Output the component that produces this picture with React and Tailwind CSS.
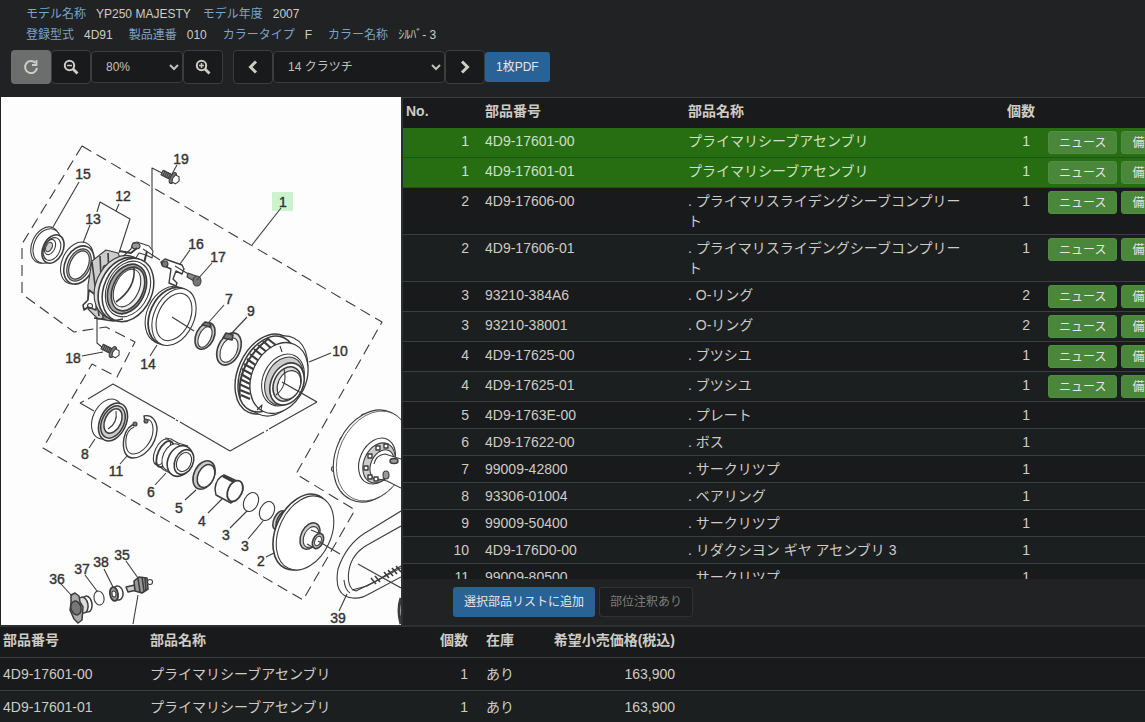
const parts = [
  { no: 1, code: '4D9-17601-00', name: 'プライマリシーブアセンブリ', qty: 1, news: true, selected: true },
  { no: 1, code: '4D9-17601-01', name: 'プライマリシーブアセンブリ', qty: 1, news: true, selected: true },
  { no: 2, code: '4D9-17606-00', name: '. プライマリスライデングシーブコンプリート', qty: 1, news: true },
  { no: 2, code: '4D9-17606-01', name: '. プライマリスライデングシーブコンプリート', qty: 1, news: true },
  { no: 3, code: '93210-384A6', name: '. O-リング', qty: 2, news: true },
  { no: 3, code: '93210-38001', name: '. O-リング', qty: 2, news: true },
  { no: 4, code: '4D9-17625-00', name: '. ブツシユ', qty: 1, news: true },
  { no: 4, code: '4D9-17625-01', name: '. ブツシユ', qty: 1, news: true },
  { no: 5, code: '4D9-1763E-00', name: '. プレート', qty: 1 },
  { no: 6, code: '4D9-17622-00', name: '. ボス', qty: 1 },
  { no: 7, code: '99009-42800', name: '. サークリツプ', qty: 1 },
  { no: 8, code: '93306-01004', name: '. ベアリング', qty: 1 },
  { no: 9, code: '99009-50400', name: '. サークリツプ', qty: 1 },
  { no: 10, code: '4D9-176D0-00', name: '. リダクシヨン ギヤ アセンブリ 3', qty: 1 },
  { no: 11, code: '99009-80500', name: '. サークリツプ', qty: 1 },
]

const cart = [
  { code: '4D9-17601-00', name: 'プライマリシーブアセンブリ', qty: 1, stock: 'あり', price: '163,900' },
  { code: '4D9-17601-01', name: 'プライマリシーブアセンブリ', qty: 1, stock: 'あり', price: '163,900' },
]

// number, label centre, then the leader line
const callouts = [
  ['19', 181, 159, 177, 165, 172, 174],
  ['15', 83, 174, 79, 182, 53, 227],
  ['12', 123, 196, 119, 204, 116, 211],
  ['13', 93, 219, 90, 225, 83, 243],
  ['16', 196, 244, 190, 250, 180, 264],
  ['17', 218, 257, 212, 263, 197, 280],
  ['1', 283, 202, 281, 208, 252, 245],
  ['7', 229, 299, 224, 305, 209, 322],
  ['9', 251, 311, 247, 317, 232, 333],
  ['10', 340, 351, 331, 353, 309, 362],
  ['14', 148, 364, 150, 356, 157, 345],
  ['18', 73, 358, 82, 356, 103, 352],
  ['8', 85, 454, 89, 448, 95, 439],
  ['11', 116, 471, 120, 464, 127, 456],
  ['6', 151, 492, 155, 485, 166, 473],
  ['5', 179, 508, 185, 500, 196, 490],
  ['4', 202, 521, 208, 513, 222, 499],
  ['3', 226, 535, 230, 528, 247, 511],
  ['3', 245, 546, 248, 539, 263, 521],
  ['2', 261, 561, 266, 557, 274, 553],
  ['39', 338, 618, 339, 611, 347, 594],
  ['36', 57, 579, 61, 584, 72, 596],
  ['37', 82, 569, 85, 575, 97, 591],
  ['38', 101, 562, 104, 569, 113, 587],
  ['35', 122, 555, 126, 561, 138, 578],
]

const Ring = ({ x, y, rx, ry, a = 25, fill = 'none', w = 1.1 }) => (
  <ellipse cx={x} cy={y} rx={rx} ry={ry} transform={`rotate(${a} ${x} ${y})`} fill={fill} strokeWidth={w} />
)

const Bolt = ({ x, y, a = 27 }) => (
  <g transform={`translate(${x} ${y}) rotate(${a})`}>
    <rect x="-1" y="-2.5" width="11" height="5" fill="#888" />
    <path d="M1 -3v6M3 -3v6M5 -3v6M7 -3v6M9 -3v6" />
    <ellipse cx="11" cy="0" rx="2.5" ry="6" fill="#777" />
    <path d="M12 -4l4 0 2 4-2 4-4 0-1-4z" fill="#fff" />
  </g>
)

const Diagram = () => (
  <svg viewBox="1 97 400 528" preserveAspectRatio="xMinYMin slice" className="block h-full w-full" role="img" aria-label="14 クラツチ">
    <rect x="272" y="192" width="21" height="19" fill="#cdf3cd" />
    <g fill="none" stroke="#3c3c3c" strokeWidth="1.1" strokeLinejoin="round">
      <path
        strokeDasharray="11 6"
        d="M82 146L22 244V294L74 332 106 327 135 342 117 377 92 364 43 448 303 600 355 510 296 474 382 322Z"
      />
      <path d="M94 411L80 403 M88 399L113 384 175 419 M180 422L230 451 264 432 M269 429L317 402 M80 403l4-2 M176 420l2 1 M266 431l2-1" />
      <path d="M152 254V168L162 173 M97 212L100 202 130 219 119 253 M97 304V343L103 348 M138 595L133 624" />

      {/* 15 */}
      <Ring x={45} y={245} rx={13} ry={19} fill="#fff" />
      <Ring x={47} y={246} rx={13} ry={18} fill="#fff" />
      <Ring x={53} y={249} rx={10} ry={15} fill="#fff" w={1.6} />
      <Ring x={52} y={249} rx={8} ry={12} />
      <Ring x={50} y={247} rx={5} ry={8} />
      <Ring x={49} y={247} rx={3} ry={5} fill="#ccc" />

      {/* 13 */}
      <Ring x={77} y={263} rx={15} ry={22} fill="#fff" />
      <Ring x={79} y={265} rx={14} ry={20} fill="#fff" w={1.6} />
      <Ring x={79} y={265} rx={11} ry={17} fill="#bbb" />
      <Ring x={79} y={265} rx={9} ry={15} fill="#fff" />

      {/* 12 */}
      <path fill="#fff" d="M131 249l2-6 4-1 12 4 4 5-1 7-6-3-7-2-5 8-14-2z" />
      <ellipse cx="136" cy="246" rx="4" ry="3" fill="#999" />
      <path d="M147 251l-3 12 M119 251l12 2 6-5" strokeWidth="2" />
      <path fill="#ccc" d="M88 285l4-24 14-11 12 3 4 9-8 55-16 2-10-10z" />
      <path d="M92 262l7 54 M100 256l3 62 M108 253l3 66" strokeWidth="1.6" />
      <path fill="#fff" d="M89 290l8 6-1 14-8-3-4 3-1-5 5-5z" strokeWidth="1.6" />
      <circle cx="90" cy="306" r="2.5" />
      <ellipse cx="107" cy="268" rx="4" ry="3" fill="#777" />
      <Ring x={120} y={287} rx={24} ry={33} fill="#ddd" />
      <Ring x={124} y={289} rx={24} ry={33} fill="#fff" w={1.6} />
      <Ring x={128} y={290} rx={24} ry={33} fill="#fff" w={1.5} />
      <Ring x={128} y={289} rx={21} ry={29} />
      <Ring x={127} y={289} rx={18} ry={26} fill="#aaa" w={1.6} />
      <Ring x={128} y={289} rx={15} ry={23} fill="#eee" w={1.6} />
      <Ring x={127} y={288} rx={12} ry={20} fill="#fff" />
      <path d="M134 268q2 20-18 34 M94 318l19 3 10-2" strokeWidth="1.6" />

      {/* 19, 18, 16, 17 */}
      <Bolt x={163} y={173} />
      <Bolt x={103} y={347} />
      <path d="M143 249l17 11" />
      <path fill="#fff" d="M161 262l4-3 17 6 2 4-2 5-6-3-3 8 4 4-1 3-7-3 2-14-9-4z" strokeWidth="1.4" />
      <ellipse cx="165" cy="264" rx="3" ry="3" fill="#777" />
      <path d="M175 266l15 9" />
      <path fill="#888" d="M188 273l8 3-2 5-7-4z" />
      <ellipse cx="197" cy="281" rx="4" ry="5" fill="#777" />

      {/* 14 */}
      <Ring x={168} y={315} rx={21} ry={30} fill="#fff" />
      <Ring x={171} y={316} rx={21} ry={30} fill="#fff" w={1.8} />
      <Ring x={174} y={317} rx={20} ry={30} fill="#fff" />
      <Ring x={174} y={317} rx={16} ry={25} fill="#fff" />
      <path d="M172 317l22 14" />

      {/* 7, 9 */}
      <Ring x={205} y={336} rx={9} ry={14} fill="#ccc" w={1.6} />
      <Ring x={205} y={337} rx={6} ry={11} fill="#fff" />
      <path d="M202 325l3-3 5 1 1 4z" fill="#777" strokeWidth="1.6" />
      <Ring x={229} y={349} rx={11} ry={17} fill="#ddd" w={1.6} />
      <Ring x={229} y={350} rx={8} ry={13} fill="#fff" />
      <path d="M223 338l3-5 7 2-1 5z" fill="#777" strokeWidth="1.6" />

      {/* 10 */}
      <Ring x={266} y={374} rx={28} ry={42} fill="#fff" w={1.4} />
      <Ring x={276} y={376} rx={29} ry={42} fill="#fff" />
      <Ring x={267} y={374} rx={26} ry={40} fill="#fff" w={1.5} />
      <path
        strokeWidth="2.2"
        d="M268 339l9 7M263 341l9 8M258 345l10 8M254 349l10 8M250 354l10 8M247 359l10 7M244 364l11 6M242 369l11 6M241 374l10 6M240 379l10 5M239 384l11 5M240 390l10 4M241 395l9 4"
      />
      <path d="M240 398q-4-34 29-60" strokeWidth="2" />
      <Ring x={279} y={378} rx={27} ry={37} fill="#fff" w={1.3} />
      <Ring x={283} y={380} rx={20} ry={27} />
      <Ring x={284} y={381} rx={18} ry={25} fill="#ccc" />
      <Ring x={287} y={384} rx={16} ry={22} fill="#fff" w={1.6} />
      <Ring x={287} y={384} rx={13} ry={18} fill="#ddd" w={1.6} />
      <Ring x={289} y={385} rx={11} ry={15} fill="#fff" />
      <path d="M284 369q4 17-8 26 M280 346l2 6 M257 410l5-5-1 5" />
      <path d="M282 382L317 402" strokeWidth="1.4" />

      {/* 8 */}
      <Ring x={107} y={419} rx={14} ry={21} fill="#fff" />
      <Ring x={113} y={422} rx={13} ry={20} fill="#eee" w={1.6} />
      <Ring x={113} y={422} rx={11} ry={17} fill="#ccc" w={1.5} />
      <Ring x={113} y={421} rx={8} ry={13} fill="#fff" w={1.5} />
      <path d="M116 411q2 12-8 18" />

      {/* 11 */}
      <path d="M136 424q-9 1-12 14c-2 11 1 20 9 20 11 0 23-13 24-28 0-9-5-16-13-14l1 6" strokeWidth="1.4" />
      <path d="M134 427q-7 3-8 12c-1 9 2 15 7 15 9 0 20-12 20-24 0-8-3-12-8-10" />
      <circle cx="135" cy="424" r="2" fill="#777" />
      <circle cx="146" cy="421" r="2" fill="#777" />

      {/* 6, 5, 4, 3 */}
      <path fill="#fff" stroke="none" d="M156 452q2-12 13-13l20 9-14 28-18-9z" />
      <path d="M165 438l6 1 7 4 10 3M155 463l9 7 12 6" />
      <Ring x={162} y={452} rx={7} ry={14} />
      <Ring x={165} y={454} rx={7} ry={14} w={1.8} />
      <Ring x={172} y={457} rx={9} ry={14} fill="#fff" />
      <Ring x={180} y={461} rx={12} ry={16} fill="#fff" w={1.6} />
      <Ring x={184} y={462} rx={9} ry={13} fill="#fff" w={1.6} />
      <Ring x={184} y={462} rx={7} ry={10} />
      <Ring x={204} y={475} rx={10} ry={15} fill="#ccc" w={1.6} />
      <Ring x={206} y={476} rx={8} ry={12} fill="#fff" w={1.5} />
      <path fill="#fff" d="M215 489q1-11 9-14l17 8q5 6-3 15l-7 5-15-8z" strokeWidth="1.5" />
      <path d="M223 476l17 9" strokeWidth="3" />
      <Ring x={235} y={491} rx={7} ry={11} fill="#fff" w={1.8} />
      <Ring x={251} y={502} rx={7} ry={10} />
      <Ring x={267} y={511} rx={7} ry={10} />

      {/* 2 */}
      <Ring x={279} y={520} rx={5} ry={10} fill="#ccc" w={1.5} />
      <Ring x={283} y={521} rx={6} ry={11} fill="#bbb" w={1.5} />
      <Ring x={302} y={532} rx={26} ry={40} fill="#fff" w={1.6} />
      <Ring x={305} y={533} rx={26} ry={39} fill="#fff" />
      <Ring x={310} y={536} rx={9} ry={14} fill="#ccc" w={1.5} />
      <Ring x={311} y={537} rx={7} ry={11} fill="#fff" />
      <path fill="#fff" stroke="none" d="M311 530l9 4-4 14-8-4z" />
      <path d="M311 530l10 4M307 544l9 5" />
      <Ring x={318} y={541} rx={5} ry={8} fill="#bbb" w={1.6} />
      <Ring x={318} y={541} rx={3} ry={5} fill="#fff" />
      <path d="M318 541L340 554 M358 564L401 588" />

      {/* pulley */}
      <circle cx="364" cy="417" r="3" />
      <circle cx="343" cy="440" r="3" />
      <circle cx="334" cy="469" r="2.5" />
      <Ring x={371} y={456} rx={35} ry={48} fill="#fff" />
      <Ring x={373} y={456} rx={34} ry={47} fill="#fff" w={0.7} />
      <Ring x={377} y={461} rx={17} ry={24} fill="#fff" />
      <Ring x={379} y={463} rx={15} ry={21} fill="#ccc" />
      <Ring x={382} y={465} rx={11} ry={16} fill="#fff" />
      {[[370, 456], [378, 448], [386, 446], [366, 468], [370, 477], [376, 479]].map(([x, y]) => (
        <rect key={`${x}-${y}`} x={x - 2} y={y - 2} width="4" height="4" fill="#fff" strokeWidth="1.4" />
      ))}
      <path fill="#fff" stroke="none" d="M380 457l21 0v30l-14-6z" />
      <path d="M374 464q2-9 11-10l16 5 M378 479l9 2 14 7" />
      <ellipse cx="394" cy="461" rx="4" ry="2.5" fill="#999" strokeWidth="1.5" />
      <ellipse cx="386" cy="475" rx="3" ry="4" fill="#999" />

      {/* 39 */}
      <path d="M401 511L365 533q-19 12-27 36c-3 17 1 28 15 29q8 1 16-4L401 577" />
      <path d="M401 526L369 544q-17 9-20 26c-2 12 1 20 7 21l20-10L401 566" />
      <path d="M344 580q1 10 6 13 M352 590l15-4 34-18" />
      <path d="M371 578l5 6M375 576l5 6M384 572l5 6M388 570l5 6M392 568l5 6M396 566l5 6" strokeWidth="1.6" />
      <path d="M401 598q-4 12 0 26" strokeWidth="3" />

      {/* 36, 37, 38, 35 */}
      <Ring x={87} y={604} rx={5} ry={8} a={-10} fill="#fff" w={1.5} />
      <Ring x={83} y={605} rx={5} ry={8} a={-10} fill="#ddd" w={1.5} />
      <path fill="#aaa" d="M71 595l4-2 4 3 1 6 3 5-1 13-4 3-4-4-4-9 1-7z" strokeWidth="1.5" />
      <Ring x={76} y={608} rx={5} ry={7} a={-15} fill="#777" w={1.5} />
      <Ring x={99} y={598} rx={5} ry={7} a={-12} />
      <Ring x={118} y={593} rx={5} ry={7} a={-10} fill="#fff" w={1.5} />
      <Ring x={114} y={594} rx={4} ry={7} a={-10} fill="#999" w={1.8} />
      <Ring x={114} y={594} rx={2} ry={3} a={-10} fill="#fff" />
      <path fill="#ccc" d="M126 587l9-2 2 5-9 2z" strokeWidth="1.5" />
      <path fill="#999" d="M134 581l5-4 8 1 1 11-6 4-7-2z" strokeWidth="1.6" />
      <path d="M138 578l2 14M142 577l2 14M145 578l1 13" strokeWidth="1.6" />
      <circle cx="150" cy="582" r="2.5" fill="#fff" />

      {callouts.map(([label, , , x1, y1, x2, y2], i) => (
        <path key={`${label}-${i}`} d={`M${x1} ${y1}L${x2} ${y2}`} />
      ))}
    </g>
    <g fill="#333" stroke="#333" strokeWidth="0.4" fontSize="14" textAnchor="middle">
      {callouts.map(([label, x, y], i) => (
        <text key={`${label}-${i}`} x={x} y={y + 5}>{label}</text>
      ))}
    </g>
  </svg>
)

const Zoom = ({ plus }) => (
  <svg viewBox="0 0 16 16" className="h-4 w-4" fill="none" stroke="currentColor" aria-hidden="true">
    <circle cx="6.5" cy="6.5" r="4.7" strokeWidth="2" />
    <path d="M10 10l4.5 4.5" strokeWidth="2.8" />
    <path d={plus ? 'M4 6.5h5M6.5 4v5' : 'M4 6.5h5'} strokeWidth="1.5" />
  </svg>
)

const Chevron = ({ d }) => (
  <svg viewBox="0 0 16 16" className="h-4 w-4" fill="none" stroke="currentColor" strokeWidth="3" aria-hidden="true">
    <path d={d} />
  </svg>
)

const toolBtn = 'flex h-[34px] w-10 items-center justify-center rounded border border-[#3a3e40] bg-[#191a1b]'
const toolSelect = 'h-8 rounded border border-[#3a3e40] bg-[#191a1b] pl-[10px] text-xs text-[#c4c0ba]'

const Field = ({ label, value }) => (
  <div className="flex gap-[10px]">
    <dt className="text-[#7ba3cb]">{label}</dt>
    <dd>{value}</dd>
  </div>
)

const SmallBtn = ({ children }) => (
  <button type="button" className="h-[23px] shrink-0 rounded-[3px] border border-[#4f8d40] bg-[#4a873a] px-[10px] text-xs text-[#e8e6e3]">
    {children}
  </button>
)

const Header = () => (
  <header className="shrink-0 pb-[13px]">
    <dl className="flex flex-col pt-1 pl-[26px] text-xs leading-[21px]">
      <div className="flex gap-3">
        <Field label="モデル名称" value="YP250 MAJESTY" />
        <Field label="モデル年度" value="2007" />
      </div>
      <div className="flex gap-4">
        <Field label="登録型式" value="4D91" />
        <Field label="製品連番" value="010" />
        <Field label="カラータイプ" value="F" />
        <Field label="カラー名称" value="ｼﾙﾊﾞ- 3" />
      </div>
    </dl>
    <div className="mt-1 flex items-center pl-[11px]">
      <button type="button" aria-label="再読み込み" className="flex h-[34px] w-10 items-center justify-center rounded bg-[#6c6d6d]">
        <svg viewBox="0 0 16 16" className="h-4 w-4" fill="none" stroke="currentColor" strokeWidth="2" aria-hidden="true">
          <path d="M12.500 4A6 6 0 1 0 14 9" />
          <path d="M13.500 1v5H9" strokeWidth="1.8" />
        </svg>
      </button>
      <button type="button" aria-label="縮小" className={toolBtn}><Zoom /></button>
      <select aria-label="倍率" defaultValue="80%" className={`${toolSelect} w-[92px]`}>
        <option>80%</option>
      </select>
      <button type="button" aria-label="拡大" className={toolBtn}><Zoom plus /></button>
      <button type="button" aria-label="前へ" className={`${toolBtn} ml-[10px]`}><Chevron d="M11 2.5L5.5 8 11 13.5" /></button>
      <select aria-label="図" defaultValue="14 クラツチ" className={`${toolSelect} w-[172px]`}>
        <option>14 クラツチ</option>
      </select>
      <button type="button" aria-label="次へ" className={toolBtn}><Chevron d="M5 2.5L10.5 8 5 13.5" /></button>
      <button type="button" className="h-[30px] rounded-[3px] bg-[#286296] px-[11px] text-xs text-[#e8e6e3]">1枚PDF</button>
    </div>
  </header>
)

const PartsTable = () => (
  <div className="min-h-0 flex-1 overflow-hidden">
    <table className="w-full min-w-[803px] table-fixed border-collapse text-sm leading-5">
      <colgroup>
        <col className="w-[74px]" />
        <col className="w-[203px]" />
        <col className="w-[298px]" />
        <col className="w-[60px]" />
        <col />
      </colgroup>
      <thead>
        <tr className="bg-[#191a1b] text-left">
          <th className="px-[3px] pt-[3px] pb-[7px]">No.</th>
          <th className="px-2 pt-[3px] pb-[7px]">部品番号</th>
          <th className="px-2 pt-[3px] pb-[7px]">部品名称</th>
          <th className="px-[3px] pt-[3px] pb-[7px] text-right">個数</th>
          <td />
        </tr>
      </thead>
      <tbody>
        {parts.map((p, i) => (
          <tr
            key={p.code}
            className={`border-b border-[#3a3e40] align-top ${p.selected ? 'bg-[#276e12] text-[#cfe0c4]' : i % 2 ? 'bg-[#1b1f1f]' : 'bg-[#191a1b]'}`}
          >
            <td className="px-2 py-[3px] text-right">{p.no}</td>
            <td className="px-2 py-[3px]">{p.code}</td>
            <td className="px-2 py-[3px]">{p.name}</td>
            <td className="px-2 py-[3px] text-right">{p.qty}</td>
            <td className="py-[3px] pl-[10px]">
              {p.news && (
                <div className="flex gap-1">
                  <SmallBtn>ニュース</SmallBtn>
                  <SmallBtn>備考</SmallBtn>
                </div>
              )}
            </td>
          </tr>
        ))}
      </tbody>
    </table>
  </div>
)

const CartTable = () => (
  <div className="h-[95px] shrink-0 overflow-hidden bg-[#191a1b]">
    <table className="w-full table-fixed border-collapse text-sm leading-5">
      <colgroup>
        <col className="w-[142px]" />
        <col className="w-[270px]" />
        <col className="w-[64px]" />
        <col className="w-[54px]" />
        <col className="w-[153px]" />
        <col />
      </colgroup>
      <thead>
        <tr className="border-b border-[#3a3e40] text-left">
          <th className="px-[3px] pt-[3px] pb-[7px]">部品番号</th>
          <th className="px-2 pt-[3px] pb-[7px]">部品名称</th>
          <th className="px-2 pt-[3px] pb-[7px] text-right">個数</th>
          <th className="px-[10px] pt-[3px] pb-[7px]">在庫</th>
          <th className="px-2 pt-[3px] pb-[7px] text-right">希望小売価格(税込)</th>
          <td />
        </tr>
      </thead>
      <tbody>
        {cart.map((c, i) => (
          <tr key={c.code} className={`border-b border-[#3a3e40] ${i % 2 ? 'bg-[#1b1f1f]' : 'bg-[#191a1b]'}`}>
            <td className="px-[3px] py-[6px]">{c.code}</td>
            <td className="px-2 py-[6px]">{c.name}</td>
            <td className="px-2 py-[6px] text-right">{c.qty}</td>
            <td className="px-[10px] py-[6px]">{c.stock}</td>
            <td className="px-2 py-[6px] text-right">{c.price}</td>
            <td />
          </tr>
        ))}
      </tbody>
    </table>
  </div>
)

const App = () => (
  <div className="flex h-screen flex-col overflow-hidden bg-[#202223] font-['Liberation_Sans','Noto_Sans_CJK_JP',sans-serif] text-[#cfcbc5]">
    <Header />
    <main className="flex min-h-0 flex-1 pl-px">
      <div className="w-[400px] shrink-0 overflow-hidden bg-[#fdfdfd]">
        <Diagram />
      </div>
      <section className="flex min-w-0 flex-1 flex-col border-t border-l-2 border-t-[#3a3e40] border-l-[#2c3031]">
        <PartsTable />
        <div className="flex h-[46px] shrink-0 items-center gap-1 pl-[50px]">
          <button type="button" className="h-[30px] rounded-[3px] bg-[#286296] px-[11px] text-xs text-[#e8e6e3]">選択部品リストに追加</button>
          <button type="button" disabled className="h-[30px] rounded-[3px] border border-[#303334] bg-[#1c1d1e] px-[10px] text-xs text-[#7f7c78]">部位注釈あり</button>
        </div>
      </section>
    </main>
    <div className="h-[2px] shrink-0 bg-[#2c3031]" />
    <CartTable />
  </div>
)

export default App
